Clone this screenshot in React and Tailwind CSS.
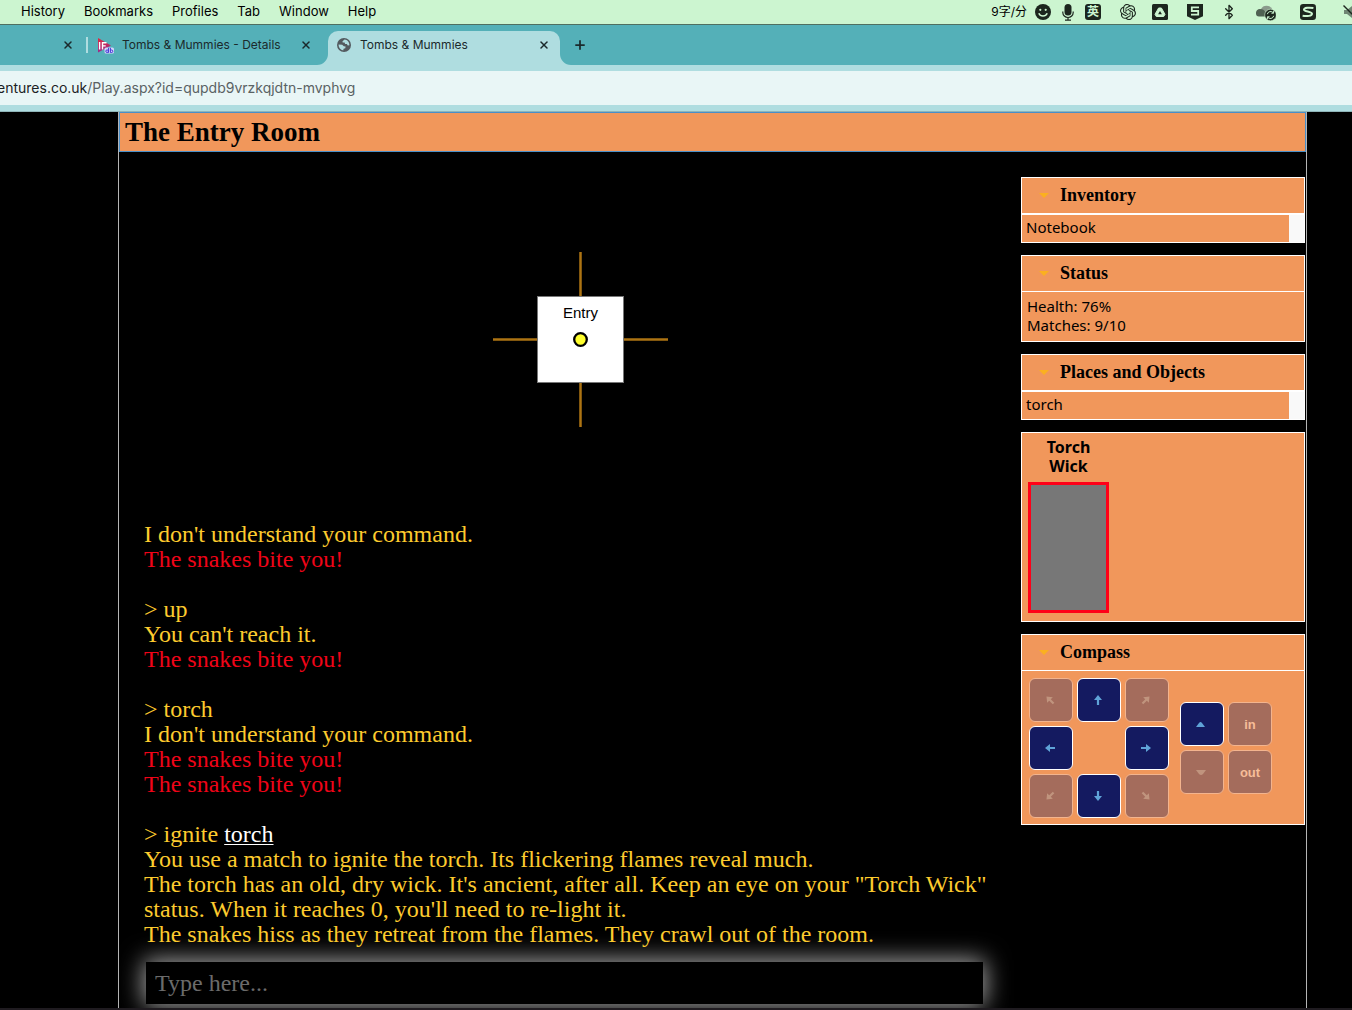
import React from "react";
import { SiOpenai } from "react-icons/si";
import { LuBluetooth, LuX, LuPlus } from "react-icons/lu";

const SERIF = "font-['Liberation_Serif',serif]";
const SANS = "font-['Noto_Sans',sans-serif]";

const MENUS = ["History", "Bookmarks", "Profiles", "Tab", "Window", "Help"];

const SmileIcon = () => (
  <svg className="size-4" viewBox="0 0 16 16">
    <circle cx="8" cy="8" r="8" fill="#1c261e" />
    <circle cx="5.3" cy="5.8" r="1.1" fill="#ccf5d0" />
    <circle cx="10.7" cy="5.8" r="1.1" fill="#ccf5d0" />
    <path d="M3.8 9.200a4.600 4.600 0 0 0 8.400 0" fill="none" stroke="#ccf5d0" strokeWidth="1.500" />
  </svg>
);

const MicIcon = () => (
  <svg className="h-[17px] w-3" viewBox="0 0 12 17">
    <rect x="2.500" y="0" width="7" height="11.500" rx="3.500" fill="#1c261e" />
    <path d="M.8 7.500v1a5.200 5 0 0 0 10.400 0v-1M6 13.500V16M3 16.200h6" fill="none" stroke="#1c261e" strokeWidth="1.200" />
  </svg>
);

const TriangleIcon = () => (
  <svg className="size-4" viewBox="0 0 16 16">
    <rect width="16" height="16" rx="1.5" fill="#1c261e" />
    <path d="M6.600 4h2.800l3.600 6.300-1.300 2.200H4.300L3 10.300z" fill="#ccf5d0" stroke="#ccf5d0" strokeLinejoin="round" />
    <path d="M8 7l1.900 3.200H6.100z" fill="#1c261e" />
  </svg>
);

const ShieldIcon = () => (
  <svg className="size-4" viewBox="0 0 16 16">
    <path d="M0 0h16v12.200L8 16l-8-3.800z" fill="#1c261e" />
    <path d="M12 3.400H4.800V7h6.400v3.600H4" fill="none" stroke="#ccf5d0" strokeWidth="1.800" />
  </svg>
);

const CloudIcon = () => (
  <svg className="h-[18px] w-5" viewBox="0 0 20 18">
    <path d="M5 6a6 5.600 0 0 1 11 0l1 5H6z" fill="#8a9a8c" />
    <path d="M0 10.500a4 4 0 0 1 4-4.500c3 0 4 1 5 2.500l2 5H3a3 3 0 0 1-3-3z" fill="#4f6152" />
    <circle cx="14.500" cy="12" r="5.800" fill="#1c261e" stroke="#ccf5d0" strokeWidth=".6" />
    <path d="M11.300 11.200a3.400 3.400 0 0 1 6-1.400M17.700 12.800a3.400 3.400 0 0 1-6 1.400M17.600 8v2.200h-2.200M11.400 16v-2.200h2.200" fill="none" stroke="#ccf5d0" strokeWidth="1" />
  </svg>
);

const SwirlIcon = () => (
  <svg className="size-4" viewBox="0 0 16 16">
    <rect width="16" height="16" rx="3.200" fill="#1c261e" />
    <path d="M13.400 4C9 3.300 4.200 3.600 4 5.700c-.1 2 8 1.700 8 4.100 0 2.200-5 2.700-9.400 2" fill="none" stroke="#ccf5d0" strokeWidth="2" />
  </svg>
);

const MutedIcon = () => (
  <svg className="size-4 shrink-0" viewBox="0 0 16 16">
    <path d="M2 6h3l5-4v12l-5-4H2z" fill="#6f8573" />
    <path d="M1.500 1.500l13 13" stroke="#1c261e" strokeWidth="1.400" />
  </svg>
);

const IfdbIcon = () => (
  <svg className="h-[17px] w-[17px]" viewBox="0 0 17 17">
    <defs>
      <linearGradient id="ifdb" x1="0" y1="0" x2="0" y2="1">
        <stop offset="0" stopColor="#e0283c" />
        <stop offset="1" stopColor="#9a2a8c" />
      </linearGradient>
    </defs>
    <path d="M1 1l13 7.500L1 15.500z" fill="url(#ifdb)" />
    <path d="M2.600 5v7.500M5.500 12.500V5.700H9.500M5.500 8.900h3.200" fill="none" stroke="#fff" strokeWidth="1.400" />
    <rect x="7.500" y="10.500" width="9.500" height="6" rx="1.500" fill="#d5d4fa" />
    <path d="M11.600 10.800v5M13.400 10.800v4.700h1.200a1.200 1.200 0 0 0 0-2.500h-1.200" fill="none" stroke="#4338d8" strokeWidth="1" />
    <circle cx="10.100" cy="14.200" r="1.300" fill="none" stroke="#4338d8" strokeWidth="1" />
  </svg>
);

const GlobeIcon = () => (
  <svg className="size-[14px]" viewBox="0 0 14 14">
    <circle cx="7" cy="7" r="7" fill="#535a5f" />
    <path d="M7.600 1.600L5.800 2.900c-.6.500-.3 1.500.5 1.600l1.300.1.500 1.300 1.800.2.900 1.300 1.600-.2C12.400 4.200 10.300 1.900 7.600 1.600z" fill="#afdde0" />
    <path d="M1.600 6.600l3.600.2 1.600 1.400 1.800.4-.3 1.600-1.700.6-.4 1.600C3.500 12.100 1.500 9.600 1.600 6.600z" fill="#afdde0" />
  </svg>
);

function MenuBar() {
  return (
    <header className="flex h-[25px] items-center justify-between overflow-hidden border-b border-[#4f6f60] bg-[#ccf5d0] font-['Inter','Noto_Sans_CJK_SC',sans-serif] text-[13px] text-black">
      <nav className="flex gap-[19px] pl-[21px]">
        {MENUS.map((m) => (
          <button key={m} type="button">{m}</button>
        ))}
      </nav>
      <div className="-mr-[6px] flex items-center text-[#1c261e]">
        <span className="text-[12px] text-black">9字/分</span>
        <span className="ml-2"><SmileIcon /></span>
        <span className="ml-[11px]"><MicIcon /></span>
        <span className="ml-[11px] flex size-4 items-center justify-center rounded-[3px] bg-[#1c261e] text-[12px] font-bold leading-none text-[#ccf5d0]">英</span>
        <SiOpenai className="ml-[19px] size-4" />
        <span className="ml-4"><TriangleIcon /></span>
        <span className="ml-[19px]"><ShieldIcon /></span>
        <LuBluetooth className="ml-[18px] size-4" />
        <span className="ml-[19px]"><CloudIcon /></span>
        <span className="ml-6"><SwirlIcon /></span>
        <span className="ml-[26px]"><MutedIcon /></span>
      </div>
    </header>
  );
}

const Close = ({ label }) => (
  <button type="button" aria-label={label} className="flex size-4 items-center justify-center text-[#1b2a2c]">
    <LuX className="size-3" strokeWidth={3} />
  </button>
);

function TabStrip() {
  return (
    <div className="flex h-10 items-end bg-[#54b0b8] font-['Inter',sans-serif] text-[12px] text-[#1b2a2c]">
      <div className="flex h-[34px] w-[86px] items-center justify-end pb-[6px] pr-[10px]">
        <Close label="Close tab" />
      </div>
      <div className="flex h-[34px] w-[231px] items-center pb-[6px]">
        <span className="h-4 w-[2px] bg-[#afdde0]" />
        <span className="ml-[9px] mr-2"><IfdbIcon /></span>
        <span className="flex-1 whitespace-nowrap">Tombs &amp; Mummies - Details</span>
        <span className="mr-[3px]"><Close label="Close Tombs & Mummies - Details" /></span>
      </div>
      <svg className="size-[11px]" viewBox="0 0 11 11"><path d="M11 0v11H0A11 11 0 0 0 11 0z" fill="#afdde0" /></svg>
      <div className="flex h-[34px] w-[232px] items-center rounded-t-[10px] bg-[#afdde0] pb-[6px] pl-[9px] pr-2">
        <GlobeIcon />
        <span className="ml-[9px] flex-1">Tombs &amp; Mummies</span>
        <Close label="Close Tombs & Mummies" />
      </div>
      <svg className="size-[11px]" viewBox="0 0 11 11"><path d="M0 0v11h11A11 11 0 0 1 0 0z" fill="#afdde0" /></svg>
      <button type="button" aria-label="New tab" className="flex h-[34px] items-center pb-[6px] pl-[2px]">
        <LuPlus className="size-[14px]" strokeWidth={3} />
      </button>
    </div>
  );
}

function AddressBar() {
  return (
    <div className="border-b border-[#8fb5b8] bg-[#afdde0] py-[6px]">
      <p className="-ml-[3px] flex h-[34px] items-center bg-[#e9f6f6] pb-[2px] font-['Inter',sans-serif] text-[14px] text-[#5a6264]">
        <span className="text-[#1b2224]">entures.co.uk</span>/Play.aspx?id=qupdb9vrzkqjdtn-mvphvg
      </p>
    </div>
  );
}

function RoomMap() {
  return (
    <svg className="mx-auto mb-[95px] mt-[100px] size-[175px]" viewBox="0 0 175 175">
      <path d="M87.500 0v175M0 87.500h175" stroke="#ad7413" strokeWidth="2.500" />
      <rect x="44.500" y="44.500" width="86" height="86" fill="#fff" stroke="#777" />
      <text x="87.500" y="66" textAnchor="middle" fontFamily="Liberation Sans, sans-serif" fontSize="15" fill="#000">Entry</text>
      <circle cx="87.500" cy="87.500" r="6.300" fill="#ffff2e" stroke="#000" strokeWidth="2.300" />
    </svg>
  );
}

const Bite = () => <p className="text-[#f00418]">The snakes bite you!</p>;

function Transcript() {
  return (
    <div className={`${SERIF} flex flex-col gap-[25px] text-[24px] leading-[25px] text-[#fdcb2e]`}>
      <div>
        <p>I don't understand your command.</p>
        <Bite />
      </div>
      <div>
        <p>&gt; up</p>
        <p>You can't reach it.</p>
        <Bite />
      </div>
      <div>
        <p>&gt; torch</p>
        <p>I don't understand your command.</p>
        <Bite />
        <Bite />
      </div>
      <div>
        <p>&gt; ignite <a href="#torch" className="text-white underline decoration-1 underline-offset-2">torch</a></p>
        <p>You use a match to ignite the torch. Its flickering flames reveal much.</p>
        <p>The torch has an old, dry wick. It's ancient, after all. Keep an eye on your "Torch Wick" status. When it reaches 0, you'll need to re-light it.</p>
        <p>The snakes hiss as they retreat from the flames. They crawl out of the room.</p>
      </div>
    </div>
  );
}

function PanelHeader({ title }) {
  return (
    <h2 className={`${SERIF} text-[18px] font-bold leading-[35px]`}>
      <button type="button" className="flex w-full items-center pl-[17px] text-left">
        <svg className="mr-[11px] h-[5px] w-[10px]" viewBox="0 0 10 5"><path d="M0 0h10L5 5z" fill="#fbb01f" /></svg>
        {title}
      </button>
    </h2>
  );
}

function Panel({ title, children }) {
  return (
    <section className="border border-white bg-[#f1975b]">
      {title && <PanelHeader title={title} />}
      {children}
    </section>
  );
}

const ItemList = ({ item }) => (
  <ul className="border-t-2 border-white bg-[#f9f9f9] pr-[15px]">
    <li className="bg-[#f1975b] pb-[2px] pl-1 leading-[25px]">{item}</li>
  </ul>
);

const ARROW = "M-5 -1.100H0V-4L5 0L0 4V1.100H-5Z";

function CompassButton({ label, angle, caret, text, on }) {
  return (
    <button
      type="button"
      aria-label={label}
      disabled={!on}
      className={
        on
          ? "flex size-11 items-center justify-center rounded-md border border-white bg-[#141a60] text-[#5fa3d8]"
          : "flex size-11 items-center justify-center rounded-md border border-[#f3b48e] bg-[#a46c5c] text-[#c0947e]"
      }
    >
      {text && <span className="font-['Liberation_Sans',sans-serif] text-[13px] font-bold text-[#f6bd98]">{text}</span>}
      {!text && (
        <svg className="mr-[2px] size-4" viewBox="-8 -8 16 16">
          {caret ? (
            <path d={caret === "up" ? "M-5 3H4L1 -1Q-.5 -3 -2 -1Z" : "M-5 -2H5L2 2Q0 4 -2 2Z"} fill="currentColor" />
          ) : (
            <g transform={`rotate(${angle})`}>
              <path d={ARROW} fill="currentColor" />
            </g>
          )}
        </svg>
      )}
    </button>
  );
}

function Compass() {
  return (
    <div className="flex items-center gap-[11px] border-t border-white px-[7px] pb-[6px] pt-[7px]">
      <div className="grid grid-cols-3 gap-1">
        <CompassButton label="northwest" angle={-135} />
        <CompassButton label="north" angle={-90} on />
        <CompassButton label="northeast" angle={-45} />
        <CompassButton label="west" angle={180} on />
        <span />
        <CompassButton label="east" angle={0} on />
        <CompassButton label="southwest" angle={135} />
        <CompassButton label="south" angle={90} on />
        <CompassButton label="southeast" angle={45} />
      </div>
      <div className="grid grid-cols-2 gap-1">
        <CompassButton label="up" caret="up" on />
        <CompassButton label="in" text="in" />
        <CompassButton label="down" caret="down" />
        <CompassButton label="out" text="out" />
      </div>
    </div>
  );
}

function Sidebar() {
  return (
    <aside className={`${SANS} mt-[25px] flex w-[284px] shrink-0 flex-col gap-3 text-[15px] leading-[19px] text-black`}>
      <Panel title="Inventory"><ItemList item="Notebook" /></Panel>
      <Panel title="Status">
        <div className="border-t border-white px-[5px] pb-[6px] pt-[5px]">
          <p>Health: 76%</p>
          <p>Matches: 9/10</p>
        </div>
      </Panel>
      <Panel title="Places and Objects"><ItemList item="torch" /></Panel>
      <Panel>
        <div className="px-[6px] pb-2 pt-[5px]">
          <div className="w-[81px] text-center text-[16px] font-bold leading-[19px]">
            <p>Torch<br />Wick</p>
            <div className="mt-[6px] h-[131px] border-[3px] border-[#ff0018] bg-[#777]" />
          </div>
        </div>
      </Panel>
      <Panel title="Compass"><Compass /></Panel>
    </aside>
  );
}

export default function App() {
  return (
    <div className="flex min-h-screen flex-col overflow-hidden bg-black">
      <MenuBar />
      <TabStrip />
      <AddressBar />
      <div className="ml-[118px] mr-[45px] grow border-x border-[#b5b5b5]">
        <h1 className={`${SERIF} border border-[#4a8fc8] bg-[#f1975b] pl-[5px] text-[27px] font-bold leading-[38px] text-black`}>The Entry Room</h1>
        <div className="flex items-start gap-1 pr-px">
          <main className="min-w-0 flex-1 pl-[25px]">
            <RoomMap />
            <Transcript />
            <input
              type="text"
              aria-label="Command"
              placeholder="Type here..."
              className={`${SERIF} mb-1 ml-[2px] mt-[15px] block h-[42px] w-[837px] max-w-full bg-black px-[9px] text-[24px] text-white shadow-[0_0_25px_2px_#aaaaaa] outline-none placeholder:text-[#6b6b6b]`}
            />
          </main>
          <Sidebar />
        </div>
      </div>
      <div className="h-[2px] bg-[#1f1b20]" />
    </div>
  );
}
